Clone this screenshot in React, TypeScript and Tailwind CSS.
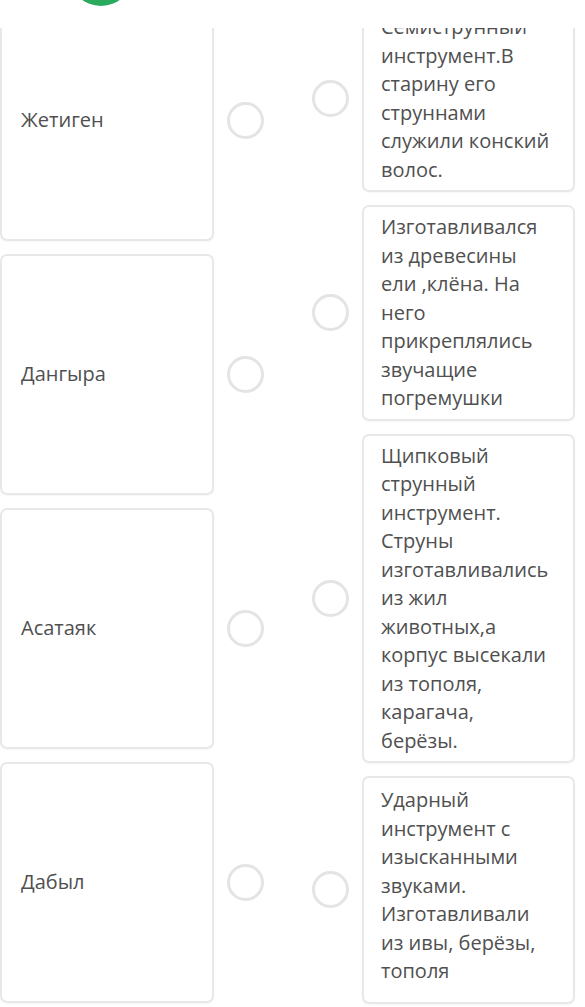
const left = ["Жетиген", "Дангыра", "Асатаяк", "Дабыл"];

const right = [
  "Семиструнный инструмент.В старину его струннами служили конский волос.",
  "Изготавливался из древесины ели ,клёна. На него прикреплялись звучащие погремушки",
  "Щипковый струнный инструмент. Струны изготавливались из жил животных,а корпус высекали из тополя, карагача, берёзы.",
  "Ударный инструмент с изысканными звуками. Изготавливали из ивы, берёзы, тополя",
];

function Radio() {
  return <div className="w-[37px] h-[37px] shrink-0 rounded-full border-[3px] border-[#e3e4e4] bg-white" />;
}

export default function App() {
  return (
    <div
      className="relative w-[585px] h-[1007px] overflow-hidden bg-white text-[#505050]"
      style={{ fontFamily: '"Open Sans", "Noto Sans", sans-serif' }}
    >
      <div className="relative h-[28px] bg-white">
        <div className="absolute left-[69px] top-[-58px] w-[64px] h-[64px] rounded-full bg-[#2aaa5c]" />
      </div>
      <div className="h-[979px] overflow-hidden">
        <div className="mt-[-28px] flex items-start">
          <div className="flex flex-col gap-[13px]">
            {left.map((t) => (
              <div key={t} className="flex items-center">
                <div className="w-[214px] h-[241px] shrink-0 flex items-center px-[19px] rounded-[7px] border-2 border-[#e8e8e8] text-[20px] leading-[28.5px] shadow-[0_1px_2px_rgba(0,0,0,0.04)]">
                  {t}
                </div>
                <div className="ml-[13px]">
                  <Radio />
                </div>
              </div>
            ))}
          </div>
          <div className="ml-[48px] pt-[5px] flex flex-col gap-[13px]">
            {right.map((t, i) => (
              <div key={i} className="flex items-center">
                <Radio />
                <div
                  className={
                    i === right.length - 1
                      ? "ml-[13px] w-[213px] shrink-0 px-[17px] pt-[8px] pb-[16px] rounded-[7px] border-2 border-[#e8e8e8] text-[20px] leading-[28.5px] shadow-[0_1px_2px_rgba(0,0,0,0.04)]"
                      : "ml-[13px] w-[213px] shrink-0 px-[17px] py-[6px] rounded-[7px] border-2 border-[#e8e8e8] text-[20px] leading-[28.5px] shadow-[0_1px_2px_rgba(0,0,0,0.04)]"
                  }
                >
                  {t}
                </div>
              </div>
            ))}
          </div>
        </div>
      </div>
    </div>
  );
}
